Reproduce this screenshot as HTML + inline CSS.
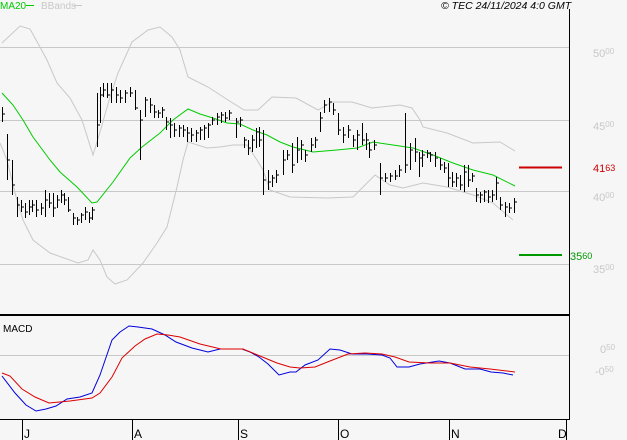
<!DOCTYPE html>
<html><head><meta charset="utf-8"><style>
html,body{margin:0;padding:0;background:#f6f6f6;width:627px;height:440px;overflow:hidden}
svg{display:block}
text{font-family:"Liberation Sans",sans-serif}
</style></head><body>
<svg width="627" height="440" viewBox="0 0 627 440" xmlns="http://www.w3.org/2000/svg">
<rect width="627" height="440" fill="#f6f6f6"/>
<g stroke="#c8c8c8" stroke-width="1" fill="none">
<path d="M0,47.5H569M0,120.5H569M0,191.5H569M0,264.5H569M0,355.5H569"/>
</g>
<g stroke="#000" fill="none">
<path d="M569.5,9V419.5H0" stroke-width="1"/>
<path d="M0,315H569" stroke-width="2"/>
<path d="M22.5,419V440M132.5,419V440M238.5,419V440M338.5,419V440M449.5,419V440M566.5,419V440"/>
</g>
<g font-size="12" fill="#000">
<text x="24" y="438">J</text><text x="134" y="438">A</text><text x="240" y="438">S</text><text x="340" y="438">O</text><text x="451" y="438">N</text><text x="558" y="438">D</text>
</g>
<text x="0" y="9" font-size="10" fill="#00cc00">MA20</text>
<path d="M26,5.5H34" stroke="#00cc00"/>
<text x="41" y="9" font-size="10" fill="#c8c8c8">BBands</text>
<path d="M74,5.5H82" stroke="#c8c8c8"/>
<text x="441" y="9" font-size="10.5" font-style="italic" fill="#000">© TEC 24/11/2024 4:0 GMT</text>
<g fill="#c8c8c8" font-size="11">
<text x="593" y="57">50<tspan font-size="8" dy="-3">00</tspan></text>
<text x="593" y="130">45<tspan font-size="8" dy="-3">00</tspan></text>
<text x="593" y="201">40<tspan font-size="8" dy="-3">00</tspan></text>
<text x="593" y="273">35<tspan font-size="8" dy="-3">00</tspan></text>
<text x="600" y="353">0<tspan font-size="8" dy="-3">50</tspan></text>
<text x="595" y="375">-0<tspan font-size="8" dy="-3">50</tspan></text>
</g>
<path d="M519,167.5H562" stroke="#cc0000" stroke-width="2"/>
<text x="593" y="172" font-size="11" fill="#cc0000">41<tspan font-size="9" dy="-1">63</tspan></text>
<path d="M519,255H562" stroke="#009900" stroke-width="2"/>
<text x="570" y="260" font-size="11" fill="#009900">35<tspan font-size="9" dy="-1">60</tspan></text>
<g stroke="#c8c8c8" fill="none" stroke-width="1">
<polyline points="2,43 20,26 30,29 40,47 47,60 57,83 70,98 82,120 93,155 100,132 110,97 118,73 132,42 148,30 160,27 172,37 180,50 188,77 208,87 228,100 244,110 258,110 272,97 296,98 318,110 332,102 352,102 372,108 400,105 412,108 420,120 423,127 447,133 473,143 500,142 515,151"/>
<polyline points="0,143 7,160 15,193 23,220 33,240 50,253 78,263 88,260 93,250 100,260 107,277 115,284 127,280 143,263 157,243 167,227 177,187 183,160 188,142 207,148 220,147 233,145 247,145 257,160 263,170 270,190 290,197 327,198 353,197 375,175 390,185 403,188 423,183 447,187 473,195 493,203 513,220"/>
</g>
<polyline fill="none" stroke="#00cc00" stroke-width="1" points="2,93 13,105 23,120 33,137 50,160 60,172 77,187 92,203 97,202 113,182 130,158 142,147 160,133 173,120 188,109 200,114 213,118 227,123 240,124 253,130 267,135 280,142 293,147 313,152 337,150 357,148 373,142 393,145 413,148 433,155 453,163 473,170 493,175 515,186"/>
<path fill="none" stroke="#000" stroke-width="1" d="M2.5,107V122M2.5,114H5M7.5,134V180M7.5,160H10M12.5,160V195M12.5,185H15M17.5,197V217M17.5,205H20M21.5,200V212M21.5,207H24M25.5,203V218M25.5,212H28M29.5,200V215M29.5,207H32M32.5,200V212M32.5,205H35M36.5,200V217M36.5,210H39M41.5,203V215M41.5,208H44M45.5,190V217M45.5,200H48M49.5,193V208M49.5,203H52M53.5,193V217M53.5,208H56M57.5,195V208M57.5,200H60M61.5,190V203M61.5,195H64M64.5,193V205M64.5,200H67M68.5,197V212M68.5,210H71M73.5,213V225M73.5,218H76M77.5,217V225M77.5,220H80M81.5,213V223M81.5,215H84M85.5,207V220M85.5,212H88M89.5,212V223M89.5,218H92M92.5,207V220M92.5,210H95M97.5,93V147M97.5,125H100M100.5,87V123M100.5,95H103M103.5,83V97M103.5,90H106M107.5,83V98M107.5,95H110M111.5,83V103M111.5,90H114M116.5,87V103M116.5,95H119M120.5,90V103M120.5,98H123M125.5,90V103M125.5,93H128M130.5,87V97M130.5,93H133M135.5,90V110M135.5,108H138M140.5,110V160M140.5,120H143M145.5,97V117M145.5,100H148M150.5,98V113M150.5,105H153M154.5,105V118M154.5,112H157M158.5,110V118M158.5,113H161M162.5,107V118M162.5,110H165M166.5,117V130M166.5,122H169M170.5,118V138M170.5,125H173M174.5,123V137M174.5,130H177M179.5,125V137M179.5,128H182M183.5,125V137M183.5,130H186M187.5,127V142M187.5,133H190M191.5,128V142M191.5,135H194M196.5,130V142M196.5,133H199M200.5,127V140M200.5,130H203M204.5,125V140M204.5,128H207M208.5,123V138M208.5,125H211M212.5,117V125M212.5,120H215M217.5,113V125M217.5,117H220M221.5,112V123M221.5,115H224M225.5,112V122M225.5,118H228M229.5,110V120M229.5,113H232M236.5,118V138M236.5,122H239M240.5,117V127M240.5,120H243M244.5,137V148M244.5,140H247M248.5,140V155M248.5,148H251M252.5,135V152M252.5,140H255M256.5,128V148M256.5,132H259M259.5,127V147M259.5,140H262M263.5,130V195M263.5,180H266M268.5,170V190M268.5,182H271M272.5,175V187M272.5,178H275M276.5,170V183M276.5,175H279M283.5,150V175M283.5,160H286M287.5,150V160M287.5,155H290M292.5,143V173M292.5,165H295M297.5,137V163M297.5,150H300M301.5,140V160M301.5,145H304M305.5,150V162M305.5,155H308M311.5,138V152M311.5,145H314M315.5,137V148M315.5,140H318M320.5,112V132M320.5,118H323M324.5,100V113M324.5,105H327M329.5,98V112M329.5,102H332M333.5,103V115M333.5,110H336M338.5,113V135M338.5,130H341M343.5,127V143M343.5,135H346M348.5,125V138M348.5,130H351M353.5,135V147M353.5,140H356M357.5,130V150M357.5,135H360M362.5,123V145M362.5,140H365M366.5,133V150M366.5,140H369M369.5,142V158M369.5,150H372M374.5,140V150M374.5,145H377M380.5,163V195M380.5,178H383M385.5,173V182M385.5,178H388M390.5,173V182M390.5,176H393M395.5,170V180M395.5,176H398M399.5,165V177M399.5,170H402M405.5,113V173M405.5,165H408M410.5,143V170M410.5,150H413M415.5,138V162M415.5,152H418M419.5,152V177M419.5,158H422M422.5,150V167M422.5,155H425M427.5,150V158M427.5,153H430M430.5,152V162M430.5,155H433M435.5,152V167M435.5,158H438M440.5,158V170M440.5,165H443M444.5,162V173M444.5,168H447M448.5,163V187M448.5,178H451M452.5,172V187M452.5,182H455M456.5,173V187M456.5,178H459M460.5,175V190M460.5,185H463M464.5,165V192M464.5,172H467M468.5,165V187M468.5,180H471M472.5,173V182M472.5,176H475M476.5,188V202M476.5,195H479M480.5,192V203M480.5,195H483M484.5,190V202M484.5,192H487M488.5,190V203M488.5,197H491M492.5,190V202M492.5,195H495M496.5,177V200M496.5,183H499M500.5,197V210M500.5,205H503M505.5,202V217M505.5,207H508M509.5,203V213M509.5,208H512M514.5,198V213M514.5,202H517"/>
<text x="3" y="332" font-size="10" fill="#000">MACD</text>
<polyline fill="none" stroke="#0000dd" stroke-width="1" points="2,376 15,393 26,405 36,411 46,409 56,406 67,399 80,397 92,393 100,375 112,340 120,332 129,326 138,327 152,329 165,335 176,342 192,348 208,352 220,349 242,349 250,352 259,357 268,364 279,375 290,372 296,372 305,365 318,360 330,349 340,350 352,354 367,354 382,355 390,358 397,367 409,367 420,364 439,361 450,363 465,369 480,369 491,372 503,373 513,375"/>
<polyline fill="none" stroke="#dd0000" stroke-width="1" points="2,373 10,376 22,389 35,397 49,403 70,401 92,398 100,393 112,377 122,358 135,346 145,339 157,334 168,335 180,337 200,344 221,349 243,349 260,356 277,363 290,367 300,368 315,367 330,361 348,354 365,353 382,354 395,357 409,362 430,363 450,363 470,367 490,369 515,372"/>
</svg>
</body></html>
